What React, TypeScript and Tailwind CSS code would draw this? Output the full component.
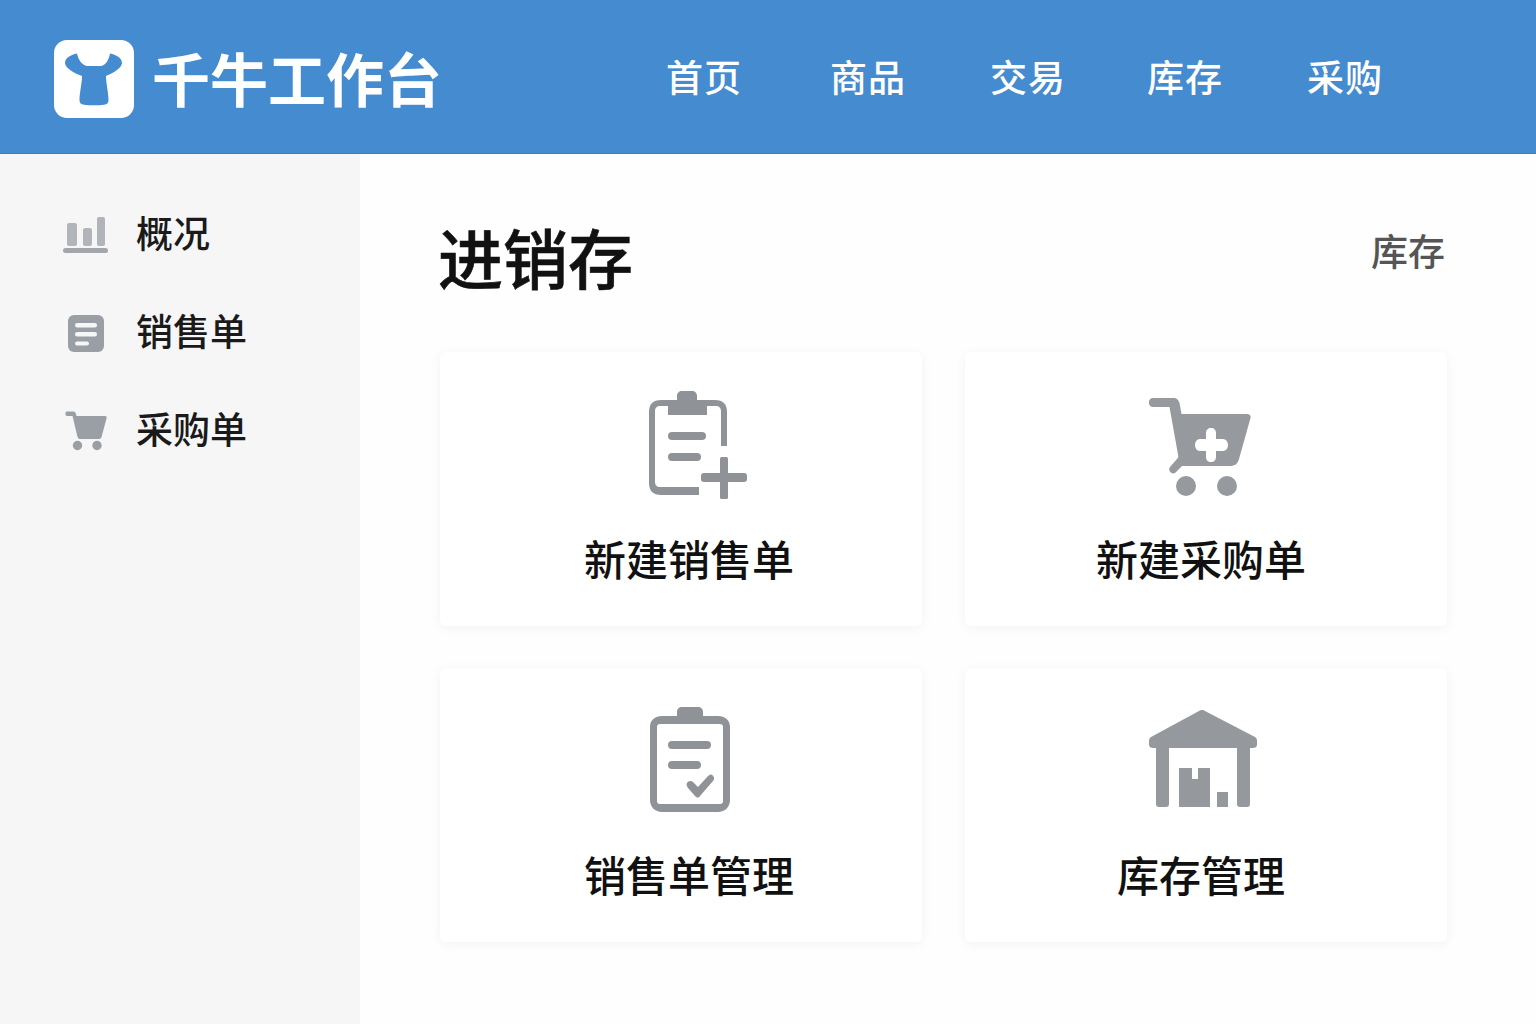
const font = { fontFamily: '"Noto Sans CJK SC", "Noto Sans", sans-serif' };

function LogoIcon() {
  return (
    <svg width="80" height="78" viewBox="0 0 80 78" className="block">
      <rect width="80" height="78" rx="13" fill="#ffffff" />
      <path
        d="M23 13.500C17 14.500 11 18 11 23C11 28 20 33 28 36C28 43 25.500 53 25.500 60C25.500 63 27 64.500 30 64.800C36 65.500 45 65.500 50 64.800C53 64.500 54.500 63 54.500 60C54.500 53 52 43 52 36C59 33 68 28 68 23C68 18 62 14.500 56 13.500C55 19 52 25.500 47 26H33C28 25.500 24 19 23 13.500Z"
        fill="#448bd0"
      />
    </svg>
  );
}

function ChartIcon() {
  return (
    <svg width="46" height="38" viewBox="0 0 46 38" className="block">
      <g fill="#b1b5ba">
        <rect x="4" y="7" width="10" height="23" rx="2" />
        <rect x="20" y="12" width="9" height="18" rx="2" />
        <rect x="34" y="1" width="8" height="29" rx="2" />
        <rect x="0" y="32" width="45" height="5" rx="2.500" fill="#a3a7ad" />
      </g>
    </svg>
  );
}

function ListIcon() {
  return (
    <svg width="36" height="37" viewBox="0 0 36 37" className="block">
      <rect width="36" height="37" rx="6" fill="#9a9ea5" />
      <g fill="#f6f6f7">
        <rect x="7" y="8" width="22" height="4.500" rx="2.250" />
        <rect x="7" y="17" width="22" height="4.500" rx="2.250" />
        <rect x="7" y="26.500" width="14" height="4" rx="2" />
      </g>
    </svg>
  );
}

function SmallCart() {
  return (
    <svg width="42" height="40" viewBox="0 0 42 40" className="block">
      <g fill="#9a9ea5">
        <path d="M1.500 0.500H8.500C10 0.500 10.500 1.500 11 3L11.500 5H40C41.500 5 42 6 41.500 7.500L36.500 26C36 27.500 35 28 33.500 28H15C13.500 28 12.800 27 12.400 25.500L7.500 5H2C0 5 0 0.500 1.500 0.500Z" />
        <circle cx="12.500" cy="34.500" r="4.700" />
        <circle cx="32" cy="34.500" r="4.700" />
      </g>
    </svg>
  );
}

function ClipboardPlus() {
  return (
    <svg width="98" height="108" viewBox="0 0 98 108" className="block">
      <g fill="#8f9397">
        <path d="M28 5C28 2 30 0 33 0H43C46 0 48 2 48 5V9H66C74 9 78 13 78 21V55H72V20C72 17 70 15 67 15H58V24H19V15H11C8 15 6 17 6 20V91C6 94 8 96 11 96H50V104H12C4 104 0 100 0 92V21C0 13 4 9 12 9H28Z" />
        <rect x="19" y="41" width="38" height="8" rx="4" />
        <rect x="19" y="62" width="33" height="8" rx="4" />
        <rect x="71" y="66" width="8" height="42" rx="1.500" />
        <rect x="52" y="82" width="46" height="9" rx="3" />
      </g>
    </svg>
  );
}

function CartPlus() {
  return (
    <svg width="102" height="98" viewBox="0 0 102 98" className="block">
      <path
        fillRule="evenodd"
        fill="#96999d"
        d="M4 0H24C28 0 29.500 2 30.500 5L32.500 16H98C101 16 102 18 101.500 20L90 61C88.500 66 86 68 81 68H33L27 74C24 78 18 73 21 69L28 61C29.500 59.500 29.500 58.500 29 56.500L20.500 9H4C-1.500 9 -1.500 0 4 0ZM62 30C59 30 57 32 57 35V41H51C48 41 46 44 46 47C46 50 48 53 51 53H57V59C57 62 59 64 62 64C65 64 67 62 67 59V53H74C77 53 79 50 79 47C79 44 77 41 74 41H67V35C67 32 65 30 62 30Z"
      />
      <circle cx="37" cy="88" r="10" fill="#96999d" />
      <circle cx="78" cy="88" r="10" fill="#96999d" />
    </svg>
  );
}

function ClipboardCheck() {
  return (
    <svg width="80" height="105" viewBox="0 0 80 105" className="block">
      <g fill="#8f9397">
        <path
          fillRule="evenodd"
          d="M27 5C27 2 29 0 32 0H48C51 0 53 2 53 5V9H68C75 9 80 13 80 20V93C80 100 75 105 68 105H12C5 105 0 100 0 93V20C0 13 5 9 12 9H27ZM10 17C8 17 7 18 7 20V94C7 96 8 97 10 97H70C72 97 73 96 73 94V20C73 18 72 17 70 17Z"
        />
        <rect x="18" y="34" width="43" height="8" rx="4" />
        <rect x="18" y="54" width="33" height="8" rx="4" />
        <path d="M37 76C38 74 41 73 43 75L48 80L58 69C60 67 62 67 63 69C64 70 65 72 63 74L50 89C49 91 47 91 45 89L38 81C37 79 36 78 37 76Z" />
      </g>
    </svg>
  );
}

function Warehouse() {
  return (
    <svg width="108" height="98" viewBox="0 0 108 98" className="block">
      <g fill="#95999e">
        <path d="M53 0C54 0 55 0 56 1L106 27C108 28 108 30 108 32V35C108 37 106 38 104 38H4C2 38 0 37 0 35V32C0 30 0 28 2 27L50 1C51 0 52 0 53 0Z" />
        <path d="M7 36H20V94C20 96 19 97 17 97H10C8 97 7 96 7 94Z" />
        <path d="M88 36H101V94C101 96 100 97 98 97H91C89 97 88 96 88 94Z" />
        <path d="M30 58H43V69H49V58H61V97H30Z" />
        <rect x="68" y="82" width="11" height="15" />
      </g>
    </svg>
  );
}

const navs = [
  { label: "首页", cls: "" },
  { label: "商品", cls: "ml-[88px]" },
  { label: "交易", cls: "ml-[84px]" },
  { label: "库存", cls: "ml-[81px]" },
  { label: "采购", cls: "ml-[84px]" },
];

const sideItems = [
  { label: "概况", icon: <ChartIcon />, pad: "pl-[63px]", gap: "w-[27px]" },
  { label: "销售单", icon: <ListIcon />, pad: "pl-[68px]", gap: "w-[32px]" },
  { label: "采购单", icon: <SmallCart />, pad: "pl-[65px]", gap: "w-[29px]" },
];

function Card({ label, icon, iconShift, textShift, top }: { label: string; icon: React.ReactNode; iconShift: string; textShift: string; top: string }) {
  return (
    <div className={`bg-white rounded-md shadow-[0_2px_12px_rgba(0,0,0,0.05)] h-[274px] flex flex-col items-center ${top}`}>
      <div className={`h-[106px] flex items-center ${iconShift}`}>{icon}</div>
      <div className={`text-[42px] leading-[56px] font-medium text-[#111111] ${textShift}`}>{label}</div>
    </div>
  );
}

export default function App() {
  return (
    <div style={font} className="w-[1536px] h-[1024px] overflow-hidden flex flex-col bg-white">
      <header className="h-[154px] shrink-0 bg-[#448bd0] border-b border-[#2f7fd3] flex items-center">
        <div className="ml-[54px] mt-[4px]"><LogoIcon /></div>
        <div className="ml-[18px] text-[58px] leading-none font-bold text-white w-[294px] whitespace-nowrap">千牛工作台</div>
        <nav className="ml-[220px] flex items-center">
          {navs.map((n) => (
            <span key={n.label} className={`text-[37px] leading-none text-white tracking-[1px] font-medium whitespace-nowrap ${n.cls}`}>{n.label}</span>
          ))}
        </nav>
      </header>
      <div className="flex-1 flex min-h-0">
        <aside className="w-[360px] shrink-0 bg-[#f6f6f7] pt-[56px] flex flex-col gap-[48px]">
          {sideItems.map((s) => (
            <div key={s.label} className={`flex items-center h-[50px] ${s.pad}`}>
              <div className="flex items-center">{s.icon}</div>
              <div className={s.gap} />
              <span className="text-[37px] leading-[50px] mb-[6px] font-medium text-[#1a1a1a] whitespace-nowrap">{s.label}</span>
            </div>
          ))}
        </aside>
        <main className="flex-1 bg-[#fefefe] pl-[80px] pr-[89px] pt-[61px]">
          <div className="flex justify-between h-[137px]">
            <h1 className="text-[65px] leading-[82px] -ml-[2px] font-medium text-[#111111] [-webkit-text-stroke:0.6px_#111111]">进销存</h1>
            <span className="text-[37px] leading-[70px] font-medium text-[#555555] pr-[2px]">库存</span>
          </div>
          <div className="grid grid-cols-2 gap-x-[43px] gap-y-[42px]">
            <Card top="pt-[40px]" label="新建销售单" icon={<ClipboardPlus />} iconShift="ml-[34px]" textShift="ml-[16px] mt-[32px]" />
            <Card top="pt-[42px]" label="新建采购单" icon={<CartPlus />} iconShift="-ml-[12px]" textShift="-ml-[10px] mt-[30px]" />
            <Card top="pt-[38px]" label="销售单管理" icon={<ClipboardCheck />} iconShift="ml-[18px]" textShift="ml-[16px] mt-[34px]" />
            <Card top="pt-[38px]" label="库存管理" icon={<Warehouse />} iconShift="-ml-[6px]" textShift="-ml-[10px] mt-[34px]" />
          </div>
        </main>
      </div>
    </div>
  );
}
